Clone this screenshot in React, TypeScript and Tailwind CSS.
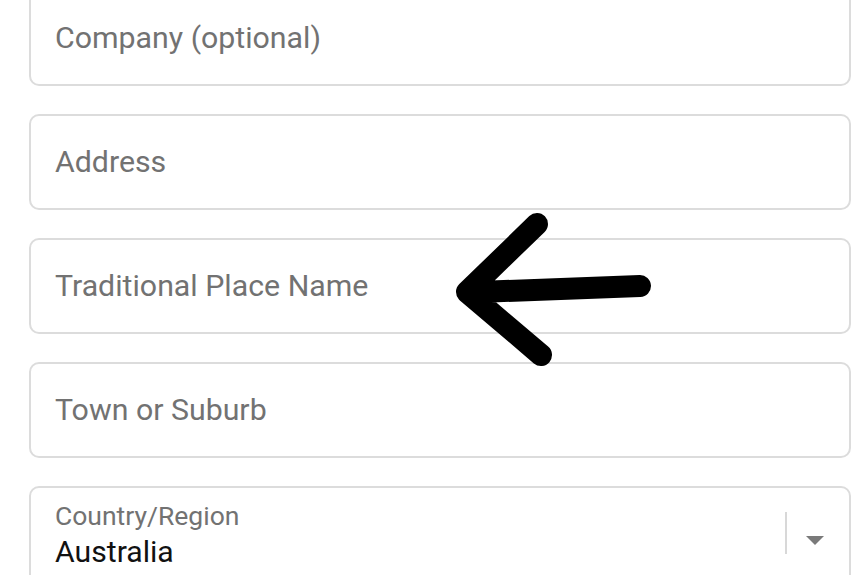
import React from 'react'

const font = { fontFamily: 'Roboto, "Liberation Sans", Arial, sans-serif' }

function Field({ label }: { label: string }) {
  return (
    <div className="flex h-[96px] items-center rounded-[10px] border-2 border-[#dcdcdc] bg-white px-[24px]">
      <span className="text-[30.3px] leading-none text-[#727272]">{label}</span>
    </div>
  )
}

export default function App() {
  return (
    <div className="relative h-[575px] w-[862px] overflow-hidden bg-white" style={font}>
      <div className="mt-[-10px] flex flex-col gap-[28px] pl-[29px] pr-[11px]">
        <Field label="Company (optional)" />
        <Field label="Address" />
        <Field label="Traditional Place Name" />
        <Field label="Town or Suburb" />
        <div className="flex h-[110px] items-start rounded-[10px] border-2 border-[#dcdcdc] bg-white pl-[24px] pr-[24px] pt-[14px]">
          <div className="flex flex-1 flex-col">
            <span className="text-[26.5px] leading-[28px] text-[#727272]">Country/Region</span>
            <span className="mt-[6px] text-[30.2px] leading-[32px] text-[#111]">Australia</span>
          </div>
          <div className="mt-[10px] h-[42px] w-[2px] bg-[#d8d8d8]" />
          <svg width="20" height="12" viewBox="0 0 20 12" className="ml-[18px] mt-[33px]">
            <path d="M1 1 L19 1 L10 10 Z" fill="#7a7a7a" />
          </svg>
        </div>
      </div>
      <svg
        className="pointer-events-none absolute left-0 top-0"
        width="862"
        height="575"
        viewBox="0 0 862 575"
      >
        <path
          d="M537 224 L467 292 L541 355 M478 292 L640 286"
          fill="none"
          stroke="#000"
          strokeWidth="22"
          strokeLinecap="round"
          strokeLinejoin="round"
        />
      </svg>
    </div>
  )
}
